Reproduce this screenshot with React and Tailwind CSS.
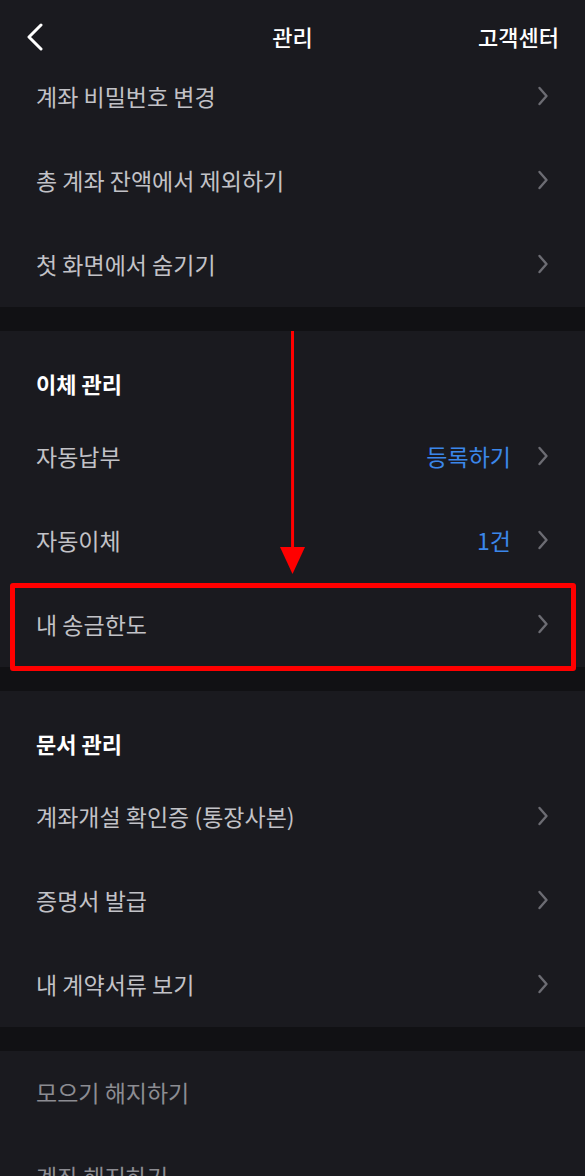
import React from 'react';

const FONT = { fontFamily: '"Noto Sans CJK KR", "Noto Sans", sans-serif' };

const Chevron = () => (
  <svg width="12" height="20" viewBox="0 0 12 20" fill="none" className="shrink-0">
    <path d="M2.5 2 L9.5 10 L2.5 18" stroke="#6c6c73" strokeWidth="2.4" strokeLinecap="round" strokeLinejoin="round" />
  </svg>
);

const Row = ({ label, value, dim, chevron = true }) => (
  <div className="h-[84px] flex items-center justify-between pl-[36px] pr-[36px] pb-[3px]">
    <span className={`text-[23px] leading-[28px] ${dim ? 'text-[#8c8c92]' : 'text-[#c2c2c7]'}`}>{label}</span>
    {chevron && (
      <div className="flex items-center gap-[26px]">
        {value && <span className="text-[23px] leading-[28px] text-[#3b87ea]">{value}</span>}
        <Chevron />
      </div>
    )}
  </div>
);

const SectionTitle = ({ children }) => (
  <div className="h-[84px] pt-[38px] pl-[36px]">
    <span className="text-[22px] leading-[28px] font-bold text-white">{children}</span>
  </div>
);

const Gap = () => <div className="h-[24px] bg-[#111114]" />;

export default function App() {
  return (
    <div style={FONT} className="relative w-[585px] h-[1176px] overflow-hidden bg-[#1a1a1f]">
      <header className="h-[55px] grid grid-cols-[1fr_auto_1fr] items-start pl-[24px] pr-[26px] pt-[22px]">
        <svg width="20" height="28" viewBox="0 0 20 28" fill="none" className="mt-[1px]">
          <path d="M17 2 L5 14 L17 26" stroke="#ffffff" strokeWidth="3" strokeLinecap="round" strokeLinejoin="round" />
        </svg>
        <span className="text-[22px] leading-[28px] font-medium text-white translate-x-[1px]">관리</span>
        <span className="justify-self-end text-[22px] leading-[28px] font-medium text-white">고객센터</span>
      </header>

      <section>
        <Row label="계좌 비밀번호 변경" />
        <Row label="총 계좌 잔액에서 제외하기" />
        <Row label="첫 화면에서 숨기기" />
      </section>
      <Gap />

      <section>
        <SectionTitle>이체 관리</SectionTitle>
        <Row label="자동납부" value="등록하기" />
        <Row label="자동이체" value="1건" />
        <Row label="내 송금한도" />
      </section>
      <Gap />

      <section>
        <SectionTitle>문서 관리</SectionTitle>
        <Row label="계좌개설 확인증 (통장사본)" />
        <Row label="증명서 발급" />
        <Row label="내 계약서류 보기" />
      </section>
      <Gap />

      <section>
        <Row label="모으기 해지하기" dim chevron={false} />
        <Row label="계좌 해지하기" dim chevron={false} />
      </section>

      <div className="absolute left-[10px] top-[583px] w-[566px] h-[88px] border-[5px] border-[#ff0000] rounded-[3px] pointer-events-none" />
      <svg className="absolute left-[278px] top-[331px] pointer-events-none" width="30" height="245" viewBox="0 0 30 245">
        <line x1="14.5" y1="0" x2="14.6" y2="220" stroke="#ff0000" strokeWidth="3" />
        <polygon points="2,216 27,216 14.5,243" fill="#ff0000" />
      </svg>
    </div>
  );
}
